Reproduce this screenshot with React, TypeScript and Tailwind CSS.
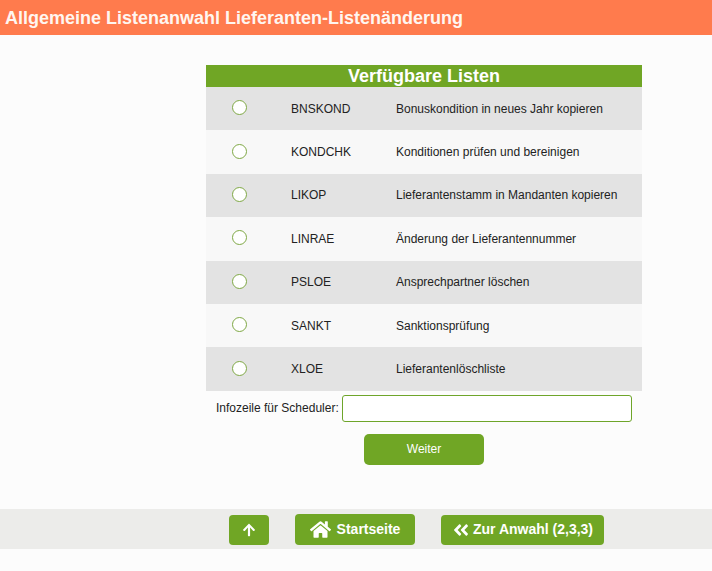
import { FaHome, FaArrowUp, FaAngleDoubleLeft } from "react-icons/fa";

const rows = [
  ["BNSKOND", "Bonuskondition in neues Jahr kopieren"],
  ["KONDCHK", "Konditionen prüfen und bereinigen"],
  ["LIKOP", "Lieferantenstamm in Mandanten kopieren"],
  ["LINRAE", "Änderung der Lieferantennummer"],
  ["PSLOE", "Ansprechpartner löschen"],
  ["SANKT", "Sanktionsprüfung"],
  ["XLOE", "Lieferantenlöschliste"],
];

export default function App() {
  return (
    <div className="min-h-[571px] bg-[#fcfcfc] font-['Liberation_Sans',Arial,sans-serif] text-[#222]">
      <header className="h-[35px] bg-[#ff7b4d] pl-[5px] text-[18px] font-bold leading-[36px] text-[#fff6f0]">
        Allgemeine Listenanwahl Lieferanten-Listenänderung
      </header>
      <main className="ml-[206px] mt-[30px] w-[436px]">
        <h2 className="h-[22px] bg-[#70a625] text-center text-[18px] font-bold leading-[22px] text-white">
          Verfügbare Listen
        </h2>
        {rows.map(([code, label], i) => (
          <div
            key={code}
            className={`flex h-[43.4px] items-center pb-[0.3px] text-[12px] ${i % 2 === 0 ? "bg-[#e3e3e3]" : "bg-[#f8f8f8]"}`}
          >
            <div className="flex w-[85px] pl-[26px]">
              <span className="mb-[1.6px] block h-[15px] w-[15px] rounded-full border border-[#7fa845] bg-white" />
            </div>
            <div className="w-[105px]">{code}</div>
            <div>{label}</div>
          </div>
        ))}
        <div className="mt-[4.2px] flex items-center pl-[10px] text-[12px]">
          <label className="mr-[3px]">Infozeile für Scheduler:</label>
          <input className="h-[27px] w-[290px] rounded-[3px] border border-[#6ea52a] bg-white outline-none" />
        </div>
        <div className="mt-[12px] flex justify-center">
          <button className="h-[31px] w-[120px] rounded-[5px] bg-[#70a625] text-[12px] text-white">
            Weiter
          </button>
        </div>
      </main>
      <footer className="mt-[44px] flex h-[40px] items-end bg-[#ececea] pb-[4px] pl-[229px] text-[14px] font-bold text-white">
        <button className="flex h-[30px] w-[40px] items-center justify-center rounded-[4px] bg-[#70a625]">
          <FaArrowUp className="text-[14px]" />
        </button>
        <button className="ml-[26px] flex h-[31px] w-[120px] items-center justify-center gap-[6px] rounded-[4px] bg-[#70a625]">
          <FaHome className="text-[21px]" />
          <span>Startseite</span>
        </button>
        <button className="ml-[26px] flex h-[30px] w-[163px] items-center justify-center gap-[3px] rounded-[4px] bg-[#70a625]">
          <FaAngleDoubleLeft className="text-[18px]" />
          Zur Anwahl (2,3,3)
        </button>
      </footer>
    </div>
  );
}
